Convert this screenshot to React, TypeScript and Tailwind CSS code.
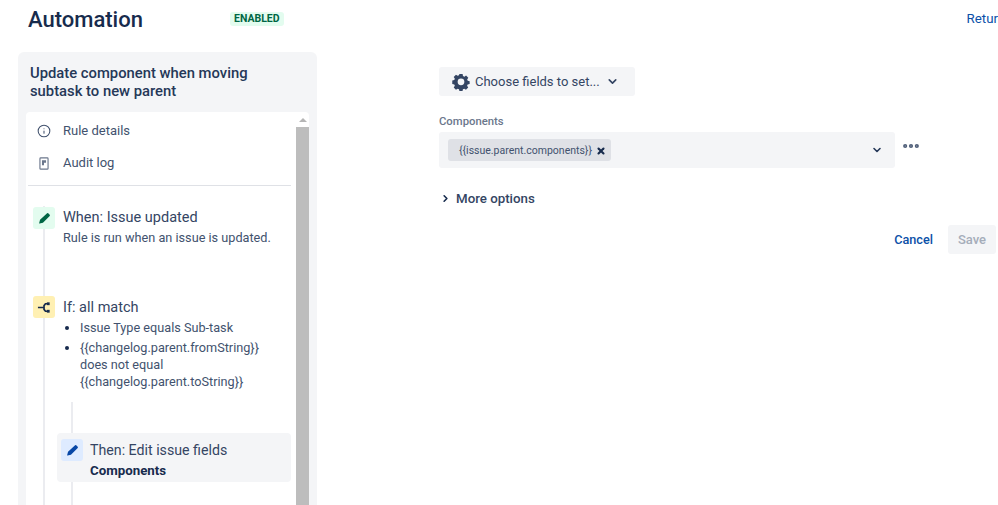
import { ChevronDown, ChevronRight, Ellipsis, Info, X } from "lucide-react";

const font = "font-['Roboto','Liberation_Sans',sans-serif]";

const Pencil = ({ className }: { className: string }) => (
  <svg viewBox="0 0 16 16" className={className} fill="currentColor">
    <path d="M11.2 1.6a1 1 0 0 1 1.4 0l1.8 1.8a1 1 0 0 1 0 1.4l-8.3 8.3-4.2 1.1a.4.4 0 0 1-.5-.5l1.1-4.2z" />
  </svg>
);

const Branch = () => (
  <svg viewBox="0 0 16 16" className="w-[15px] h-[15px] text-[#172b4d]" fill="none" stroke="currentColor" strokeWidth="1.8">
    <path d="M1 8h6M11 4H9L7.500 6v4L9 12h2" />
    <rect x="10.500" y="2.500" width="3" height="3" fill="currentColor" stroke="none" />
    <rect x="10.500" y="10.500" width="3" height="3" fill="currentColor" stroke="none" />
  </svg>
);

const Gear = () => (
  <svg viewBox="0 0 20 20" className="w-[18px] h-[18px] text-[#344563]" fill="currentColor">
    <path
      fillRule="evenodd"
      d="M8 0.8h4l.5 2.5 1.7.7 2.1-1.4 2.8 2.8-1.4 2.1.7 1.7 2.5.5-.1 0v3.6l-2.5.5-.7 1.7 1.4 2.1-2.8 2.8-2.1-1.4-1.7.7-.5 2.2H8l-.5-2.2-1.7-.7-2.1 1.4-2.8-2.8 1.4-2.1-.7-1.7-2.5-.5V8.700l2.5-.5.7-1.7-1.4-2.1 2.8-2.8 2.1 1.4 1.700-.7zM10 6.300a4.200 4.200 0 1 0 0 8.400 4.200 4.200 0 0 0 0-8.400z"
      transform="translate(1.100 0.500) scale(0.89)"
    />
  </svg>
);

const AuditLog = () => (
  <svg viewBox="0 0 12 16" className="w-[10px] h-[13px] text-[#6b778c]" fill="none" stroke="currentColor" strokeWidth="1.4">
    <rect x="1" y="1" width="10" height="14" rx="1" />
    <path d="M3.5 4h5v3h-2.500v3h-2.500z" fill="currentColor" stroke="none" />
  </svg>
);

const App = () => {
  return (
    <div className={`${font} w-[998px] h-[505px] overflow-hidden bg-white text-[#172b4d] flex flex-col`}>
      <header className="h-[52px] shrink-0 flex items-start">
        <h1 className="ml-[28px] mt-[5px] text-[22px] leading-[30px] font-medium w-[202px]">Automation</h1>
        <span className="mt-[12px] h-[14px] px-[4px] rounded-[3px] bg-[#e3fcef] text-[#006644] text-[10.5px] leading-[14px] font-bold">ENABLED</span>
        <a className="ml-auto mt-[10px] text-[#0b50a8] text-[13.3px] leading-[18px] whitespace-nowrap">Retur</a>
      </header>

      <div className="flex-1 min-h-0 flex">
        <aside className="ml-[18px] w-[299px] bg-[#f4f5f7] rounded-t-[6px] pl-[8px] pr-[8px] flex flex-col">
          <h2 className="pl-[4px] pr-[30px] pt-[12px] text-[14.8px] leading-[18px] font-medium h-[60px] text-[#253858]">
            Update component when moving subtask to new parent
          </h2>
          <div className="flex-1 min-h-0 flex bg-white rounded-t-[4px]">
            <div className="w-[270px] shrink-0 flex flex-col">
              <div className="h-[74px] ml-[2px] mr-[5px] border-b border-[#dfe1e6] text-[#42526e] text-[13px]">
                <div className="h-[38px] flex items-center pl-[9px] gap-[12px]">
                  <Info className="w-[14px] h-[14px]" strokeWidth={1.8} />
                  <span>Rule details</span>
                </div>
                <div className="h-[26px] flex items-center pl-[11px] gap-[14px]">
                  <AuditLog />
                  <span>Audit log</span>
                </div>
              </div>

              <div className="flex-1 min-h-0 relative pl-[7px]">
                <div className="absolute left-[17px] top-[20px] bottom-0 w-[2px] bg-[#ebecf0]" />
                <div className="absolute left-[45px] top-[216px] bottom-0 w-[2px] bg-[#ebecf0]" />

                <div className="relative h-[110px] pt-[21px] flex gap-[8px]">
                  <div className="w-[22px] h-[22px] rounded-[3px] bg-[#e3fcef] text-[#006644] flex items-center justify-center">
                    <Pencil className="w-[13px] h-[13px]" />
                  </div>
                  <div className="mt-[2px]">
                    <p className="text-[14.5px] leading-[18px] text-[#344563]">When: Issue updated</p>
                    <p className="text-[12.7px] leading-[22px] text-[#42526e]">Rule is run when an issue is updated.</p>
                  </div>
                </div>

                <div className="relative h-[137px] flex gap-[8px]">
                  <div className="w-[22px] h-[22px] rounded-[3px] bg-[#fff0b3] flex items-center justify-center">
                    <Branch />
                  </div>
                  <div className="mt-[3px]">
                    <p className="text-[14.5px] leading-[18px] text-[#344563]">If: all match</p>
                    <ul className="mt-[2px] list-disc pl-[17px] text-[12.7px] leading-[17px] text-[#42526e] marker:text-[#172b4d]">
                      <li>Issue Type equals Sub-task</li>
                      <li className="mt-[3px]">
                        {"{{changelog.parent.fromString}}"}
                        <br />
                        does not equal
                        <br />
                        {"{{changelog.parent.toString}}"}
                      </li>
                    </ul>
                  </div>
                </div>

                <div className="relative ml-[24px] mr-[5px] h-[49px] rounded-[4px] bg-[#f4f5f7] pl-[4px] pt-[6px] flex gap-[7px]">
                  <div className="w-[22px] h-[22px] rounded-[3px] bg-[#deebff] text-[#0747a6] flex items-center justify-center">
                    <Pencil className="w-[13px] h-[13px]" />
                  </div>
                  <div className="mt-[2px]">
                    <p className="text-[14.2px] leading-[18px] text-[#344563]">Then: Edit issue fields</p>
                    <p className="text-[13.3px] leading-[23px] font-bold text-[#172b4d]">Components</p>
                  </div>
                </div>
              </div>
            </div>

            <div className="w-[13px] shrink-0 flex flex-col">
              <div className="h-[15px] flex items-center justify-center">
                <div className="w-0 h-0 border-x-[4px] border-x-transparent border-b-[4px] border-b-[#b5b5b5]" />
              </div>
              <div className="flex-1 bg-[#bdbdbd]" />
            </div>
          </div>
        </aside>

        <main className="ml-[122px] flex-1 min-w-0 pt-[15px]">
          <button className="w-[196px] h-[29px] rounded-[3px] bg-[#f4f5f7] flex items-center pl-[13px] text-[13px] text-[#344563]">
            <Gear />
            <span className="ml-[5px] pt-[1px]">Choose fields to set...</span>
            <ChevronDown className="ml-[6px] w-[13px] h-[13px]" strokeWidth={3} />
          </button>

          <label className="block mt-[19px] mb-[-1px] text-[11.3px] leading-[14px] font-medium text-[#6b778c]">Components</label>

          <div className="mt-[4px] flex items-start">
            <div className="w-[456px] h-[36px] rounded-[3px] bg-[#f4f5f7] flex items-center pl-[9px] pr-[12px]">
              <div className="w-[163px] h-[22px] rounded-[3px] bg-[#dfe1e6] flex items-center pt-[1px] pl-[11px] pr-[5px] justify-between text-[10.5px] text-[#42526e]">
                <span>{"{{issue.parent.components}}"}</span>
                <X className="w-[10px] h-[10px] text-[#172b4d]" strokeWidth={5} />
              </div>
              <ChevronDown className="ml-auto w-[12px] h-[12px] text-[#253858]" strokeWidth={3.2} />
            </div>
            <Ellipsis className="ml-[6px] mt-[4px] w-[20px] h-[20px] text-[#505f79]" strokeWidth={3} />
          </div>

          <div className="mt-[21px] flex items-center text-[13.3px] font-medium text-[#344563]">
            <ChevronRight className="w-[11px] h-[11px] text-[#172b4d] ml-[1px]" strokeWidth={3.5} />
            <span className="ml-[5px]">More options</span>
          </div>

          <div className="mt-[16px] pr-[2px] flex items-center justify-end gap-[15px]">
            <a className="text-[12.7px] font-medium text-[#0b50a8]">Cancel</a>
            <button className="w-[48px] h-[29px] rounded-[3px] bg-[#f4f5f7] text-[13px] font-medium text-[#a5adba]">Save</button>
          </div>
        </main>
      </div>
    </div>
  );
};

export default App;
